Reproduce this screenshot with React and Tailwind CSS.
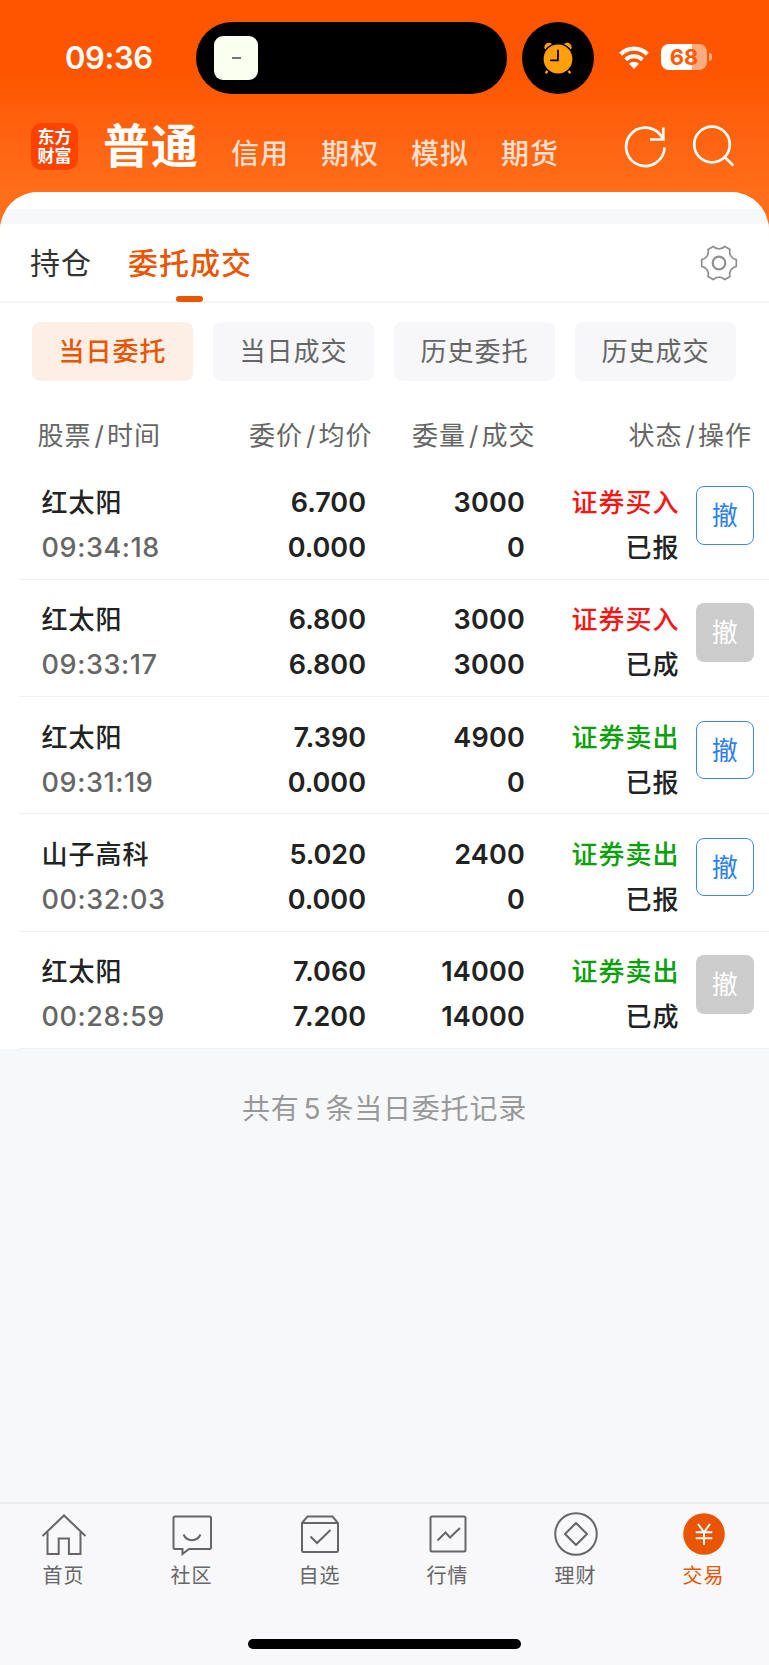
import React from "react";

const accountTabs = ["信用", "期权", "模拟", "期货"];
const filters = ["当日委托", "当日成交", "历史委托", "历史成交"];

const orders = [
  { name: "红太阳", time: "09:34:18", price: "6.700", avg: "0.000", qty: "3000", filled: "0", side: "buy", status: "已报" },
  { name: "红太阳", time: "09:33:17", price: "6.800", avg: "6.800", qty: "3000", filled: "3000", side: "buy", status: "已成" },
  { name: "红太阳", time: "09:31:19", price: "7.390", avg: "0.000", qty: "4900", filled: "0", side: "sell", status: "已报" },
  { name: "山子高科", time: "00:32:03", price: "5.020", avg: "0.000", qty: "2400", filled: "0", side: "sell", status: "已报" },
  { name: "红太阳", time: "00:28:59", price: "7.060", avg: "7.200", qty: "14000", filled: "14000", side: "sell", status: "已成" },
];

const StatusBar = () => (
  <div className="flex h-[116px] pt-[22px]">
    <div className="w-[196px] pl-[65px] pt-[18px] text-[31px] leading-[36px] font-semibold tracking-[-0.4px] text-white">
      09:36
    </div>
    <div className="flex h-[72px] w-[311px] items-center rounded-full bg-black pl-[18px]">
      <div className="flex h-[44px] w-[44px] items-center justify-center rounded-[9px] bg-[#fbfff0]">
        <div className="h-[2px] w-[9px] bg-[#6b7a78]"></div>
      </div>
    </div>
    <div className="ml-[15px] flex h-[72px] w-[72px] items-center justify-center rounded-full bg-black">
      <svg width="32" height="34" viewBox="0 0 32 34">
        <circle cx="6.800" cy="6.200" r="4.400" fill="#ff9f0a" />
        <circle cx="25.200" cy="6.200" r="4.400" fill="#ff9f0a" />
        <path d="M7 28l-2.800 3.400M25 28l2.800 3.400" stroke="#ff9f0a" strokeWidth="2.400" strokeLinecap="round" />
        <circle cx="16" cy="18" r="15.200" fill="#ff9f0a" stroke="#000" strokeWidth="1.600" />
        <path d="M16 9.500v9.800H8.800" fill="none" stroke="#000" strokeWidth="1.800" strokeLinecap="round" strokeLinejoin="round" />
      </svg>
    </div>
    <svg className="mt-[23px] ml-[24px]" width="32" height="25" viewBox="0 0 32 25" fill="none" stroke="#fff">
      <path d="M2.600 9.200a19 19 0 0 1 26.800 0" strokeWidth="4.200" />
      <path d="M7.600 14.800a12 12 0 0 1 16.800 0" strokeWidth="4" />
      <path d="M16 24l-5-5.200a7.200 7.200 0 0 1 10 0z" fill="#fff" stroke="none" />
    </svg>
    <div className="mt-[22px] ml-[11px] flex h-[26px] items-center">
      <div className="flex h-[26px] w-[46px] items-center justify-center rounded-[8px] bg-linear-to-r from-white from-68% to-[#ffab80] to-68% text-[22px] leading-[26px] font-bold text-[#ff5a05]">
        68
      </div>
      <div className="ml-[2px] h-[8px] w-[3px] rounded-r-full bg-[#ffab80]"></div>
    </div>
  </div>
);

const Header = () => (
  <div className="flex h-[76px] pl-[31px] text-white">
    <div className="mt-[7px] flex h-[47px] w-[47px] flex-col items-center justify-center rounded-[10px] bg-[#ff4200] text-[17px] leading-[19px] font-bold">
      <span>东方</span>
      <span>财富</span>
    </div>
    <div className="ml-[25px] w-[98px] text-[47px] leading-[59px] font-bold tracking-[1px]">普通</div>
    <div className="mt-[17px] ml-[30px] flex w-[328px] gap-[32px] text-[28px] leading-[42px] font-medium tracking-[1px] text-[#ffdfce]">
      {accountTabs.map((tab) => (
        <span key={tab}>{tab}</span>
      ))}
    </div>
    <svg className="mt-[9px] ml-[65px] shrink-0" width="44" height="44" viewBox="0 0 44 44" fill="none" stroke="#fff" strokeWidth="2.700">
      <path d="M40.500 22.500A19.200 19.200 0 1 1 36.300 9.800L39 13.500" />
      <path d="M39.300 2.500v12H26" />
    </svg>
    <svg className="mt-[8px] ml-[24px] shrink-0" width="44" height="44" viewBox="0 0 44 44" fill="none" stroke="#fff" strokeWidth="2.700">
      <circle cx="20" cy="20.500" r="17.800" />
      <path d="M32.400 32.800l9 8.800" />
    </svg>
  </div>
);

const GearIcon = () => (
  <svg width="38" height="38" viewBox="0 0 38 38" fill="none" stroke="#8f8f8f" strokeWidth="1.700" strokeLinejoin="round">
    <path d="M13.200 2.400C16 5.600 22 5.600 24.800 2.400L30 5.400C28.700 10 31.300 14.500 36.300 15.700V22.300C31.300 23.500 28.700 28 30 32.600L24.800 35.600C22 32.400 16 32.400 13.200 35.600L8 32.600C9.300 28 6.700 23.500 1.700 22.300V15.700C6.700 14.500 9.300 10 8 5.400Z" />
    <circle cx="19" cy="19" r="6.300" strokeWidth="2.200" />
  </svg>
);

const OrderRow = ({ order }) => {
  const done = order.status === "已成";
  return (
    <div className="ml-[19px] flex h-[117.3px] border-b border-[#f0f0f0] pt-[17.5px] text-[26px] leading-[45px] font-medium tracking-[1px] text-[#222]">
      <div className="w-[180px] pl-[22.5px]">
        <div>{order.name}</div>
        <div className="text-[27px] tracking-[0.6px] text-[#666]">{order.time}</div>
      </div>
      <div className="w-[167px] text-right text-[27px] font-semibold">
        <div className="tracking-normal">{order.price}</div>
        <div className="tracking-normal">{order.avg}</div>
      </div>
      <div className="w-[159px] text-right text-[27px] font-semibold">
        <div className="tracking-[0.2px]">{order.qty}</div>
        <div className="tracking-[0.2px]">{order.filled}</div>
      </div>
      <div className="w-[154.5px] text-right">
        <div className={order.side === "buy" ? "text-[#fa1515]" : "text-[#0aa00a]"}>
          {order.side === "buy" ? "证券买入" : "证券卖出"}
        </div>
        <div>{order.status}</div>
      </div>
      <button
        className={`mt-[6px] ml-[16px] h-[58.5px] w-[58.5px] rounded-[8px] text-center text-[26px] leading-[57px] font-normal tracking-normal ${
          done ? "bg-[#ccc] text-white" : "border border-[#3d87ee] text-[#2f7fe8]"
        }`}
      >
        撤
      </button>
    </div>
  );
};

const navItems = [
  {
    label: "首页",
    icon: (
      <>
        <path d="M1.5 24L23 3.5 44.5 24" />
        <path d="M6.5 20v22h11.2V26.5h10.2V42h11.6V20" />
      </>
    ),
  },
  {
    label: "社区",
    icon: (
      <>
        <path d="M6 4.500h34.500a1.500 1.500 0 0 1 1.500 1.500v29.500a1.500 1.500 0 0 1-1.500 1.500H20l-6.500 5v-5H6a1.500 1.500 0 0 1-1.500-1.500V6a1.500 1.500 0 0 1 1.500-1.500z" />
        <path d="M14.500 22.500c3.500 7.500 13.500 7.500 17 0" />
      </>
    ),
  },
  {
    label: "自选",
    icon: (
      <>
        <path d="M5 11L10.500 4.500h25L41 11v27.500a1.500 1.500 0 0 1-1.500 1.500h-33A1.500 1.500 0 0 1 5 38.500zM5 11h36" />
        <path d="M13.500 24.500l6.500 6.500 13.500-13" />
      </>
    ),
  },
  {
    label: "行情",
    icon: (
      <>
        <rect x="5.500" y="4.500" width="35" height="35" rx="1.500" />
        <path d="M12.500 28.500l8-8 4.500 5 10-9.500" />
      </>
    ),
  },
  {
    label: "理财",
    icon: (
      <>
        <circle cx="23" cy="22" r="20.800" />
        <path d="M23 11l11 11-11 11-11-11z" strokeLinejoin="round" />
      </>
    ),
  },
  {
    label: "交易",
    active: true,
    icon: (
      <>
        <circle cx="23" cy="22" r="20.800" fill="#ea5504" stroke="none" />
        <path d="M17 12l6 8.300L29 12M23 20.300V33M14.700 20.300h16.600M14.700 26.300h16.600" stroke="#fff" />
      </>
    ),
  },
];

const BottomNav = () => (
  <div className="h-[163px] border-t-2 border-[#ebecee] bg-[#f8f8fa]">
    <div className="flex pr-[1px]">
      {navItems.map((item) => (
        <div key={item.label} className="flex flex-1 flex-col items-center pt-[8px]">
          <svg width="46" height="44" viewBox="0 0 46 44" fill="none" stroke="#666" strokeWidth="2">
            {item.icon}
          </svg>
          <span className={`mt-[2px] mr-[1px] text-[20px] leading-[36px] tracking-[1px] ${item.active ? "text-[#ea5504]" : "text-[#666]"}`}>
            {item.label}
          </span>
        </div>
      ))}
    </div>
    <div className="mx-auto mt-[45px] h-[10px] w-[273px] rounded-full bg-black"></div>
  </div>
);

const App = () => {
  return (
    <div className="flex h-[1665px] w-[769px] flex-col overflow-hidden bg-[#ff6a16] bg-linear-to-b from-[#ff5500] from-[70px] to-[#ff6f1a] to-[200px] font-['Inter','Noto_Sans_CJK_SC',sans-serif]">
      <StatusBar />
      <Header />
      <div className="flex flex-1 flex-col overflow-hidden rounded-t-[38px] bg-[#f7f8fa]">
        <div className="h-[17px] bg-white"></div>
        <div className="mt-[15px] bg-white">
          {/* section tabs */}
          <div className="flex h-[79px] justify-between border-b-2 border-[#f6f6f7] pr-[31px] pl-[30px]">
            <div className="flex gap-[36px] text-[30px] leading-[79px] tracking-[1px]">
              <span className="text-[#333]">持仓</span>
              <div className="flex h-[78px] flex-col items-center justify-between font-medium text-[#ea5504]">
                <span className="h-[72px] leading-[79px]">委托成交</span>
                <div className="mr-[1px] h-[6px] w-[27px] rounded-[3px] bg-[#ea5504]"></div>
              </div>
            </div>
            <div className="mt-[20px]">
              <GearIcon />
            </div>
          </div>

          {/* filters */}
          <div className="mt-[19px] flex gap-[20px] pr-[33px] pl-[32px]">
            {filters.map((filter, i) => (
              <button
                key={filter}
                className={`h-[59px] flex-1 rounded-[8px] text-[26px] leading-[60px] tracking-[1px] ${
                  i === 0 ? "bg-[#fdeee6] font-medium text-[#ea5504]" : "bg-[#f7f7fa] text-[#666]"
                }`}
              >
                {filter}
              </button>
            ))}
          </div>

          {/* table head */}
          <div className="mt-[30px] flex h-[51.5px] pl-[37.5px] text-[26px] leading-[50px] tracking-[1px] text-[#666]">
            <div className="w-[155px]">股票<span className="mr-[2px] ml-[3px]">/</span>时间</div>
            <div className="w-[180px] text-right">委价<span className="mr-[2px] ml-[3px]">/</span>均价</div>
            <div className="w-[163px] text-right">委量<span className="mr-[2px] ml-[3px]">/</span>成交</div>
            <div className="w-[216.5px] text-right">状态<span className="mr-[2px] ml-[3px]">/</span>操作</div>
          </div>

          {orders.map((order) => (
            <OrderRow key={order.time} order={order} />
          ))}
        </div>
        <div className="mt-[38px] text-center text-[28px] leading-[44px] tracking-[0.8px] text-[#999]">
          共有<span className="mx-[4px]">5</span>条当日委托记录
        </div>
        <div className="mt-auto">
          <BottomNav />
        </div>
      </div>
    </div>
  );
};

export default App;
